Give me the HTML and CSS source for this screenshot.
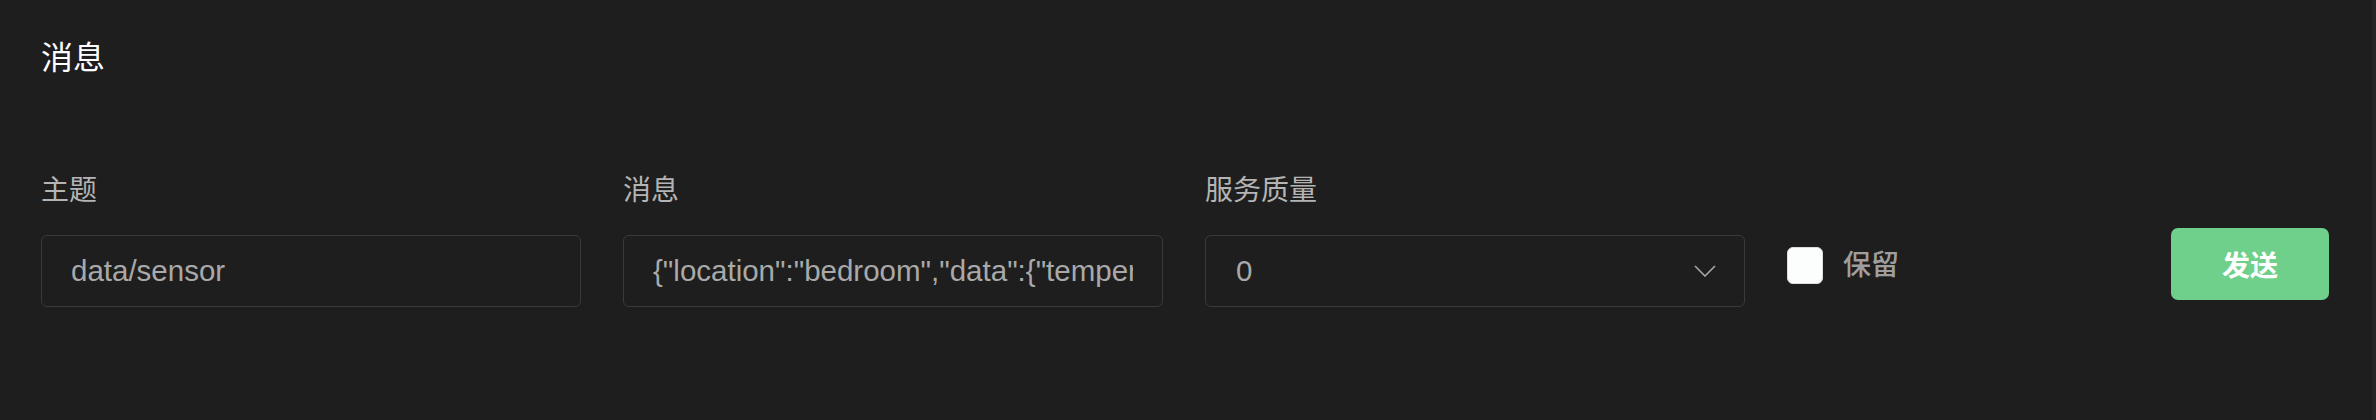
FILE: index.html
```html
<!DOCTYPE html>
<html lang="zh-CN">
<head>
    <meta charset="UTF-8" />
    <meta name="viewport" content="width=device-width, initial-scale=1.0" />
    <title>消息</title>
    <link rel="stylesheet" href="styles.css">
</head>
<body>
    <!-- ========= Panel de publicación ========= -->
    <div class="panel">
        <h2 class="panel-title">消息</h2>

        <div class="publish-row">
            <div class="field">
                <label class="field-label" for="topic">主题</label>
                <input class="field-input" id="topic" type="text" value="data/sensor">
            </div>

            <div class="field">
                <label class="field-label" for="payload">消息</label>
                <input class="field-input" id="payload" type="text" value='{"location":"bedroom","data":{"temperature":25,"humidity":60}}'>
            </div>

            <div class="field">
                <label class="field-label">服务质量</label>
                <div class="field-input select">
                    <span>0</span>
                    <svg class="select-arrow" width="22" height="12" viewBox="0 0 22 12">
                        <polyline points="1,1 11,11 21,1" fill="none" stroke="#a6a6a6" stroke-width="1.6" />
                    </svg>
                </div>
            </div>

            <label class="retain">
                <span class="retain-box"></span>
                <span class="retain-text">保留</span>
            </label>

            <button class="send-btn" type="button">发送</button>
        </div>
    </div>
</body>
</html>
```

FILE: styles.css
```css
:root {
    --bg: #1e1e1e;
    --border: #3a3a3a;
    --label: #b4b4b4;
    --text: #a9a9a9;
    --green: #6fd08c;
}

body {
    margin: 0;
    min-height: 100vh;
    box-sizing: border-box;
    background: var(--bg);
    border-right: 4px solid #262626;
    font-family: "Liberation Sans", "Noto Sans CJK SC", sans-serif;
    color: var(--text);
}

/* ====== Panel ====== */
.panel {
    padding: 38px 43px 0 41px;
}
.panel-title {
    margin: 0;
    font-size: 32px;
    line-height: 40px;
    font-weight: 400;
    color: #fff;
}

/* ====== Fila del formulario ====== */
.publish-row {
    display: flex;
    align-items: flex-end;
    gap: 42px;
    margin-top: 95px;
}
.field {
    width: 540px;
}
.field-label {
    display: block;
    margin-bottom: 26px;
    font-size: 28px;
    line-height: 36px;
    color: var(--label);
}
.field-input {
    box-sizing: border-box;
    width: 100%;
    height: 72px;
    padding: 0 29px;
    border: 1px solid var(--border);
    border-radius: 6px;
    background: transparent;
    font: inherit;
    font-size: 29.5px;
    color: var(--text);
    outline: none;
}
.select {
    display: flex;
    align-items: center;
    justify-content: space-between;
    padding-left: 30px;
    padding-right: 28px;
}

/* ====== Retener ====== */
.retain {
    display: flex;
    align-items: center;
    gap: 20px;
    margin-bottom: 23px;
}
.retain-box {
    box-sizing: border-box;
    width: 36px;
    height: 37px;
    border: 1px solid #dcdcdc;
    border-radius: 6px;
    background: #fcfdfd;
}
.retain-text {
    font-size: 28px;
    line-height: 36px;
    font-weight: 500;
    color: #9e9e9e;
}

/* ====== Botón ====== */
.send-btn {
    margin-left: auto;
    margin-bottom: 7px;
    width: 158px;
    height: 72px;
    border: none;
    border-radius: 7px;
    background: var(--green);
    font: inherit;
    font-size: 28px;
    font-weight: 700;
    color: #fff;
}
```
